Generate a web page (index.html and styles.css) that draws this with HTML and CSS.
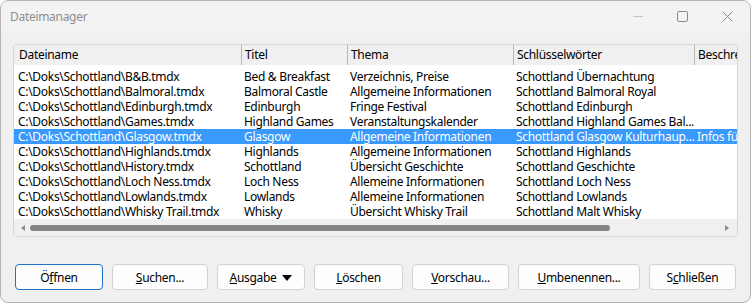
FILE: index.html
```html
<!DOCTYPE html>
<html lang="de">
<head>
    <meta charset="UTF-8">
    <title>Dateimanager</title>
    <link rel="stylesheet" href="styles.css">
</head>
<body>
    <div class="window">
        <div class="titlebar">
            <span class="title">Dateimanager</span>
            <div class="controls">
                <span class="ctl"><svg width="10" height="10" viewBox="0 0 10 10"><path d="M0 5.5h10" stroke="#c4c4c4" stroke-width="1"/></svg></span>
                <span class="ctl"><svg width="11" height="11" viewBox="0 0 11 11"><rect x="0.5" y="0.5" width="10" height="10" rx="1.5" fill="none" stroke="#8a8a8a"/></svg></span>
                <span class="ctl"><svg width="11" height="11" viewBox="0 0 11 11"><path d="M0.5 0.5l10 10M10.5 0.5l-10 10" stroke="#8a8a8a" stroke-width="1"/></svg></span>
            </div>
        </div>

        <div class="content">
            <!-- Dateiliste -->
            <div class="list">
                <div class="row head">
                    <div class="c c1">Dateiname</div>
                    <div class="c c2">Titel</div>
                    <div class="c c3">Thema</div>
                    <div class="c c4">Schlüsselwörter</div>
                    <div class="c c5">Beschreibung</div>
                </div>
                <div class="rows">
                    <div class="row"><div class="c c1">C:\Doks\Schottland\B&amp;B.tmdx</div><div class="c c2">Bed &amp; Breakfast</div><div class="c c3">Verzeichnis, Preise</div><div class="c c4">Schottland Übernachtung</div><div class="c c5"></div></div>
                    <div class="row"><div class="c c1">C:\Doks\Schottland\Balmoral.tmdx</div><div class="c c2">Balmoral Castle</div><div class="c c3">Allgemeine Informationen</div><div class="c c4">Schottland Balmoral Royal</div><div class="c c5"></div></div>
                    <div class="row"><div class="c c1">C:\Doks\Schottland\Edinburgh.tmdx</div><div class="c c2">Edinburgh</div><div class="c c3">Fringe Festival</div><div class="c c4">Schottland Edinburgh</div><div class="c c5"></div></div>
                    <div class="row"><div class="c c1">C:\Doks\Schottland\Games.tmdx</div><div class="c c2">Highland Games</div><div class="c c3">Veranstaltungskalender</div><div class="c c4">Schottland Highland Games Bal...</div><div class="c c5"></div></div>
                    <div class="row selected"><div class="c c1">C:\Doks\Schottland\Glasgow.tmdx</div><div class="c c2">Glasgow</div><div class="c c3">Allgemeine Informationen</div><div class="c c4">Schottland Glasgow Kulturhaup...</div><div class="c c5">Infos für Besucher</div></div>
                    <div class="row"><div class="c c1">C:\Doks\Schottland\Highlands.tmdx</div><div class="c c2">Highlands</div><div class="c c3">Allgemeine Informationen</div><div class="c c4">Schottland Highlands</div><div class="c c5"></div></div>
                    <div class="row"><div class="c c1">C:\Doks\Schottland\History.tmdx</div><div class="c c2">Schottland</div><div class="c c3">Übersicht Geschichte</div><div class="c c4">Schottland Geschichte</div><div class="c c5"></div></div>
                    <div class="row"><div class="c c1">C:\Doks\Schottland\Loch Ness.tmdx</div><div class="c c2">Loch Ness</div><div class="c c3">Allemeine Informationen</div><div class="c c4">Schottland Loch Ness</div><div class="c c5"></div></div>
                    <div class="row"><div class="c c1">C:\Doks\Schottland\Lowlands.tmdx</div><div class="c c2">Lowlands</div><div class="c c3">Allemeine Informationen</div><div class="c c4">Schottland Lowlands</div><div class="c c5"></div></div>
                    <div class="row"><div class="c c1">C:\Doks\Schottland\Whisky Trail.tmdx</div><div class="c c2">Whisky</div><div class="c c3">Übersicht Whisky Trail</div><div class="c c4">Schottland Malt Whisky</div><div class="c c5"></div></div>
                </div>
                <!-- horizontale Scrollleiste -->
                <div class="hscroll">
                    <span class="arrow left"></span>
                    <div class="track"><div class="thumb"></div></div>
                    <span class="arrow right"></span>
                </div>
            </div>

            <!-- Buttons -->
            <div class="buttons">
                <button class="btn default b1">Ö<u>f</u>fnen</button>
                <button class="btn b2"><u>S</u>uchen...</button>
                <button class="btn b3"><u>A</u>usgabe <span class="caret"></span></button>
                <button class="btn b4"><u>L</u>öschen</button>
                <button class="btn b5"><u>V</u>orschau...</button>
                <button class="btn b6"><u>U</u>mbenennen...</button>
                <button class="btn b7">S<u>c</u>hließen</button>
            </div>
        </div>
    </div>
</body>
</html>
```

FILE: styles.css
```css
/* Dateimanager dialog */
body {
    margin: 0;
    background: #ffffff;
    font-family: "Noto Sans", "Liberation Sans", sans-serif;
    font-size: 12px;
    letter-spacing: -0.3px;
    color: #000;
}

.window {
    width: 751px;
    height: 303px;
    box-sizing: border-box;
    border: 1px solid #b4b4b4;
    border-radius: 8px;
    background: #f0f0f0;
    overflow: hidden;
    display: flex;
    flex-direction: column;
}

.titlebar {
    height: 30px;
    display: flex;
    align-items: center;
    background: #f3f3f3;
}

.title {
    padding-left: 9px;
    color: #8e8e8e;
    flex: 1;
}

.controls {
    display: flex;
    height: 100%;
}

.ctl {
    width: 45px;
    display: flex;
    align-items: center;
    justify-content: center;
}

.content {
    padding: 13px 12px 0 12px;
}

/* list view */
.list {
    background: #ffffff;
    border: 1px solid #d5d5d5;
    border-radius: 3px;
    height: 191px;
    overflow: hidden;
    white-space: nowrap;
}

.row {
    display: flex;
    height: 15px;
    line-height: 15px;
}

.row.head {
    height: 20px;
    line-height: 20px;
    background: #f0f0f0;
    margin-bottom: 4px;
}

.c {
    box-sizing: border-box;
    overflow: hidden;
    flex: none;
    padding-left: 2px;
}

.row.head .c {
    border-right: 1px solid #b8b8b8;
    padding-left: 3px;
}

.c1 { width: 228px; }
.c2 { width: 106px; }
.c3 { width: 166px; }
.c4 { width: 181px; }
.c5 { width: 120px; }

.row .c1 { padding-left: 4px; }
.row.head .c1 { padding-left: 5px; }

.row.selected {
    background: #3a99fd;
    color: #ffffff;
}

.hscroll {
    height: 17px;
    background: #f0f0f0;
    display: flex;
    align-items: center;
}

.arrow {
    width: 0;
    height: 0;
    border-top: 3px solid transparent;
    border-bottom: 3px solid transparent;
}

.arrow.left {
    border-right: 4px solid #8a8a8a;
    margin: 0 5px 0 7px;
}

.arrow.right {
    border-left: 4px solid #8a8a8a;
    margin: 0 8px 0 5px;
}

.track {
    flex: 1;
}

.thumb {
    width: 580px;
    height: 6px;
    border-radius: 3px;
    background: #858585;
}

/* button row */
.buttons {
    display: flex;
    justify-content: space-between;
    margin: 27px 2px 0 2px;
}

.btn {
    height: 26px;
    box-sizing: border-box;
    padding: 0;
    background: #fdfdfd;
    border: 1px solid #d2d2d2;
    border-radius: 4px;
    font-family: inherit;
    font-size: 12px;
    letter-spacing: -0.3px;
    color: #000;
}

.btn.default {
    border-color: #1f72c4;
}

.b1 { width: 88px; }
.b2 { width: 96px; }
.b3 { width: 88px; }
.b4 { width: 89px; }
.b5 { width: 97px; }
.b6 { width: 122px; }
.b7 { width: 87px; }

.caret {
    display: inline-block;
    width: 0;
    height: 0;
    border-left: 5px solid transparent;
    border-right: 5px solid transparent;
    border-top: 6px solid #000;
    margin-left: 3px;
    vertical-align: 1px;
}
```
